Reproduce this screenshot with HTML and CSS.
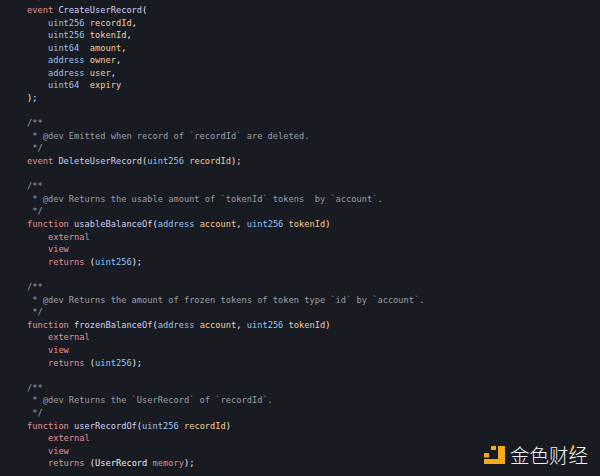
FILE: index.html
```html
<!DOCTYPE html>
<html lang="en">
<head>
<meta charset="utf-8">
<title>Solidity interface</title>
<link rel="stylesheet" href="styles.css">
</head>
<body>
<main class="editor">
<pre class="code"><span class="c"> */</span>
<span class="k">event</span> <span class="f">CreateUserRecord</span><span class="p">(</span>
    <span class="t">uint256</span> <span class="v">recordId</span><span class="p">,</span>
    <span class="t">uint256</span> <span class="v">tokenId</span><span class="p">,</span>
    <span class="t">uint64</span>  <span class="v">amount</span><span class="p">,</span>
    <span class="t">address</span> <span class="v">owner</span><span class="p">,</span>
    <span class="t">address</span> <span class="v">user</span><span class="p">,</span>
    <span class="t">uint64</span>  <span class="v">expiry</span>
<span class="p">);</span>

<span class="c">/**</span>
<span class="c"> * @dev Emitted when record of `recordId` are deleted.</span>
<span class="c"> */</span>
<span class="k">event</span> <span class="f">DeleteUserRecord</span><span class="p">(</span><span class="t">uint256</span> <span class="v">recordId</span><span class="p">);</span>

<span class="c">/**</span>
<span class="c"> * @dev Returns the usable amount of `tokenId` tokens  by `account`.</span>
<span class="c"> */</span>
<span class="k">function</span> <span class="f">usableBalanceOf</span><span class="p">(</span><span class="t">address</span> <span class="v">account</span><span class="p">,</span> <span class="t">uint256</span> <span class="v">tokenId</span><span class="p">)</span>
    <span class="k">external</span>
    <span class="k">view</span>
    <span class="k">returns</span> <span class="p">(</span><span class="t">uint256</span><span class="p">);</span>

<span class="c">/**</span>
<span class="c"> * @dev Returns the amount of frozen tokens of token type `id` by `account`.</span>
<span class="c"> */</span>
<span class="k">function</span> <span class="f">frozenBalanceOf</span><span class="p">(</span><span class="t">address</span> <span class="v">account</span><span class="p">,</span> <span class="t">uint256</span> <span class="v">tokenId</span><span class="p">)</span>
    <span class="k">external</span>
    <span class="k">view</span>
    <span class="k">returns</span> <span class="p">(</span><span class="t">uint256</span><span class="p">);</span>

<span class="c">/**</span>
<span class="c"> * @dev Returns the `UserRecord` of `recordId`.</span>
<span class="c"> */</span>
<span class="k">function</span> <span class="f">userRecordOf</span><span class="p">(</span><span class="t">uint256</span> <span class="v">recordId</span><span class="p">)</span>
    <span class="k">external</span>
    <span class="k">view</span>
    <span class="k">returns</span> <span class="p">(</span><span class="n">UserRecord</span> <span class="m">memory</span><span class="p">);</span></pre>
</main>
<div class="brand">
<svg class="brand-icon" viewBox="0 0 21 18" aria-hidden="true">
<path d="M14 0h7v18H0v-5h14z" fill="#f3ab1c"/>
<rect x="0" y="7" width="5" height="4.500" fill="#f3ab1c"/>
<rect x="7" y="0" width="5" height="4" fill="#f3ab1c"/>
</svg>
<span class="brand-name">金色财经</span>
<svg class="brand-accent" viewBox="0 0 5 10" aria-hidden="true">
<path d="M3.500 0L1 6.500M2.500 9.500h0.500" stroke="#f3ab1c" stroke-width="1.500" fill="none"/>
</svg>
</div>
</body>
</html>
```
FILE: styles.css
```css
html, body {
  margin: 0;
  height: 100%;
  overflow: hidden;
  background: #181b22;
}
.editor {
  height: 476px;
  overflow: hidden;
  padding-left: 27px;
}
.code {
  margin: -8.7px 0 0;
  font-family: "DejaVu Sans Mono", "Liberation Mono", monospace;
  font-size: 8.7px;
  line-height: 12.6px;
  color: #c9ced6;
}
.c { color: #9a9ea4; }
.k { color: #e09292; }
.f { color: #cfd0f5; }
.t { color: #9cc2ee; }
.v { color: #f2cb9c; }
.p { color: #e8ebef; }
.n { color: #e8ebef; }
.m { color: #d98a8a; }
.brand {
  position: absolute;
  left: 484px;
  top: 445px;
  display: flex;
  align-items: center;
  gap: 5px;
}
.brand-icon {
  width: 21px;
  height: 18px;
  display: block;
}
.brand-name {
  font-family: "Noto Sans CJK SC", "Noto Sans", sans-serif;
  font-size: 19.500px;
  line-height: 19px;
  font-weight: 300;
  color: #eef0f2;
}
.brand-accent {
  position: absolute;
  left: 86px;
  top: 0;
  width: 5px;
  height: 10px;
}
```
